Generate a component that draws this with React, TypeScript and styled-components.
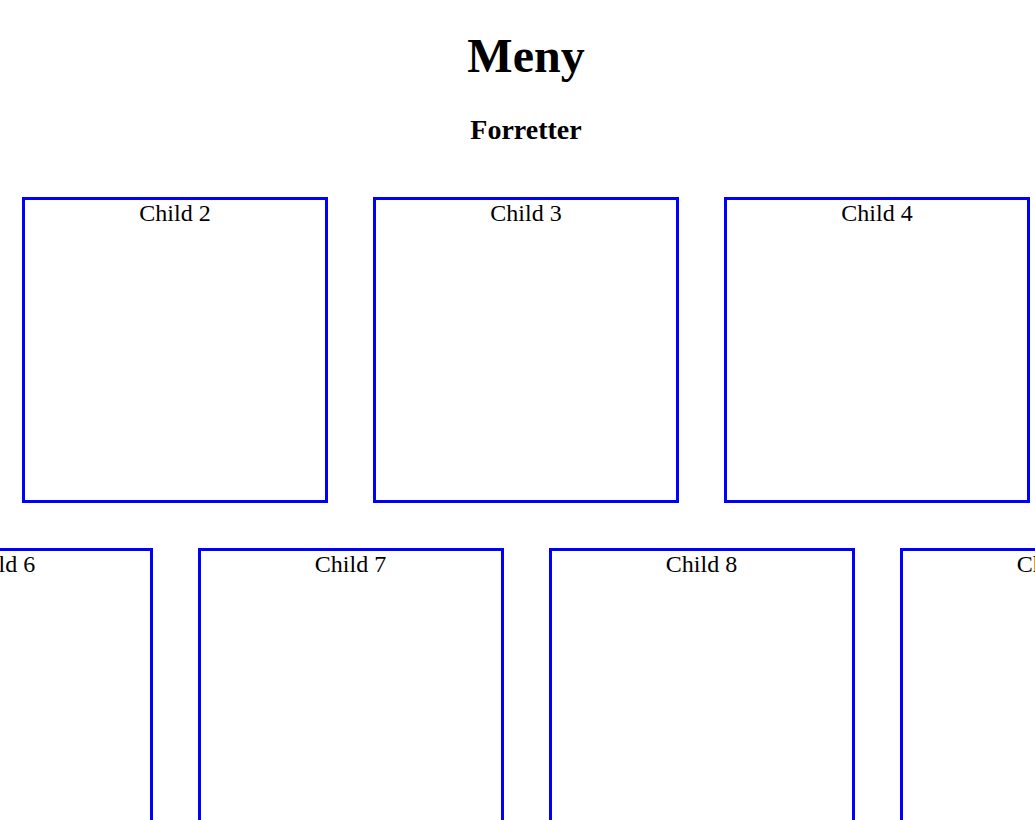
import React from "react";
import styled, { createGlobalStyle } from "styled-components";

const GlobalStyle = createGlobalStyle`
  *, *::before, *::after {
    box-sizing: border-box;
  }

  body {
    margin: 0;
    background: #fff;
    color: #000;
    font-family: "Liberation Serif", "Times New Roman", serif;
    font-size: 24px;
    line-height: 27px;
  }
`;

const Page = styled.main`
  padding: 28px 0 0 17px;
  overflow-x: clip;
  text-align: center;
`;

const Title = styled.h1`
  margin: 0 0 30px;
  font-size: 48px;
  line-height: 56px;
`;

const Subtitle = styled.h2`
  margin: 0 0 51px;
  font-size: 28px;
  line-height: 32px;
`;

const Courses = styled.div`
  display: flex;
  flex-direction: column;
  gap: 45px;
`;

const Row = styled.section`
  display: flex;
  justify-content: center;
  gap: 45px;
`;

const Child = styled.div`
  flex: none;
  width: 306px;
  height: 306px;
  border: 3px solid #00f;
`;

const rows = [
  [1, 2, 3, 4, 5],
  [6, 7, 8, 9],
];

export default function App() {
  return (
    <>
      <GlobalStyle />
      <Page>
        <Title>Meny</Title>
        <Subtitle>Forretter</Subtitle>
        <Courses>
          {rows.map((row) => (
            <Row key={row[0]}>
              {row.map((n) => (
                <Child key={n}>Child {n}</Child>
              ))}
            </Row>
          ))}
        </Courses>
      </Page>
    </>
  );
}
